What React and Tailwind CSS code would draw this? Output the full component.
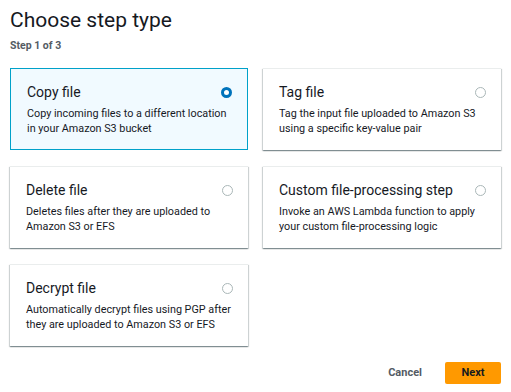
const options = [
  {
    title: "Copy file",
    lines: ["Copy incoming files to a different location", "in your Amazon S3 bucket"],
    selected: true,
  },
  {
    title: "Tag file",
    lines: ["Tag the input file uploaded to Amazon S3", "using a specific key-value pair"],
  },
  {
    title: "Delete file",
    lines: ["Deletes files after they are uploaded to", "Amazon S3 or EFS"],
  },
  {
    title: "Custom file-processing step",
    lines: ["Invoke an AWS Lambda function to apply", "your custom file-processing logic"],
  },
  {
    title: "Decrypt file",
    lines: ["Automatically decrypt files using PGP after", "they are uploaded to Amazon S3 or EFS"],
  },
];

function Radio({ checked }) {
  if (checked) {
    return (
      <span className="block w-[11px] h-[11px] rounded-full border-[3px] border-[#0073bb] bg-white" />
    );
  }
  return (
    <span className="block w-[11px] h-[11px] rounded-full border border-[#aab7b8] bg-white" />
  );
}

function OptionCard({ title, lines, selected }) {
  return (
    <div
      className={`h-[82px] pl-4 pr-[15px] pt-[12px] ${
        selected
          ? "border border-[#00a1c9] bg-[#f1faff]"
          : "border-t border-[#eaeded] bg-white shadow-[0_1px_1px_0_rgba(0,28,36,0.3),1px_1px_1px_0_rgba(0,28,36,0.15),-1px_1px_1px_0_rgba(0,28,36,0.15)]"
      }`}
    >
      <div className="flex items-center justify-between">
        <h3 className="text-[14px] leading-[22px] text-[#16191f]">{title}</h3>
        <Radio checked={selected} />
      </div>
      <p className="mt-[3px] text-[10.8px] leading-[15px] text-[#16191f]">
        {lines.map((l) => (
          <span key={l} className="block whitespace-nowrap">
            {l}
          </span>
        ))}
      </p>
    </div>
  );
}

export default function App() {
  return (
    <div
      className="w-[511px] h-[392px] bg-white px-[10px] pt-[6px] text-[#16191f]"
      style={{ fontFamily: 'Roboto, "Noto Sans", Arial, sans-serif' }}
    >
      <h1 className="text-[21px] leading-[28px]">Choose step type</h1>
      <p className="mt-[5px] text-[10.5px] leading-[14px] font-bold text-[#545b64]">Step 1 of 3</p>

      <div className="mt-[15px] grid grid-cols-2 gap-x-[15px] gap-y-[16px]">
        {options.map((o) => (
          <OptionCard key={o.title} {...o} />
        ))}
      </div>

      <div className="mt-[16px] flex justify-end items-center gap-[23px]">
        <button className="text-[11px] font-bold text-[#545b64]">Cancel</button>
        <button className="w-[56px] h-[22px] rounded-[2px] bg-[#ff9900] text-[11px] font-bold text-[#16191f]">
          Next
        </button>
      </div>
    </div>
  );
}
